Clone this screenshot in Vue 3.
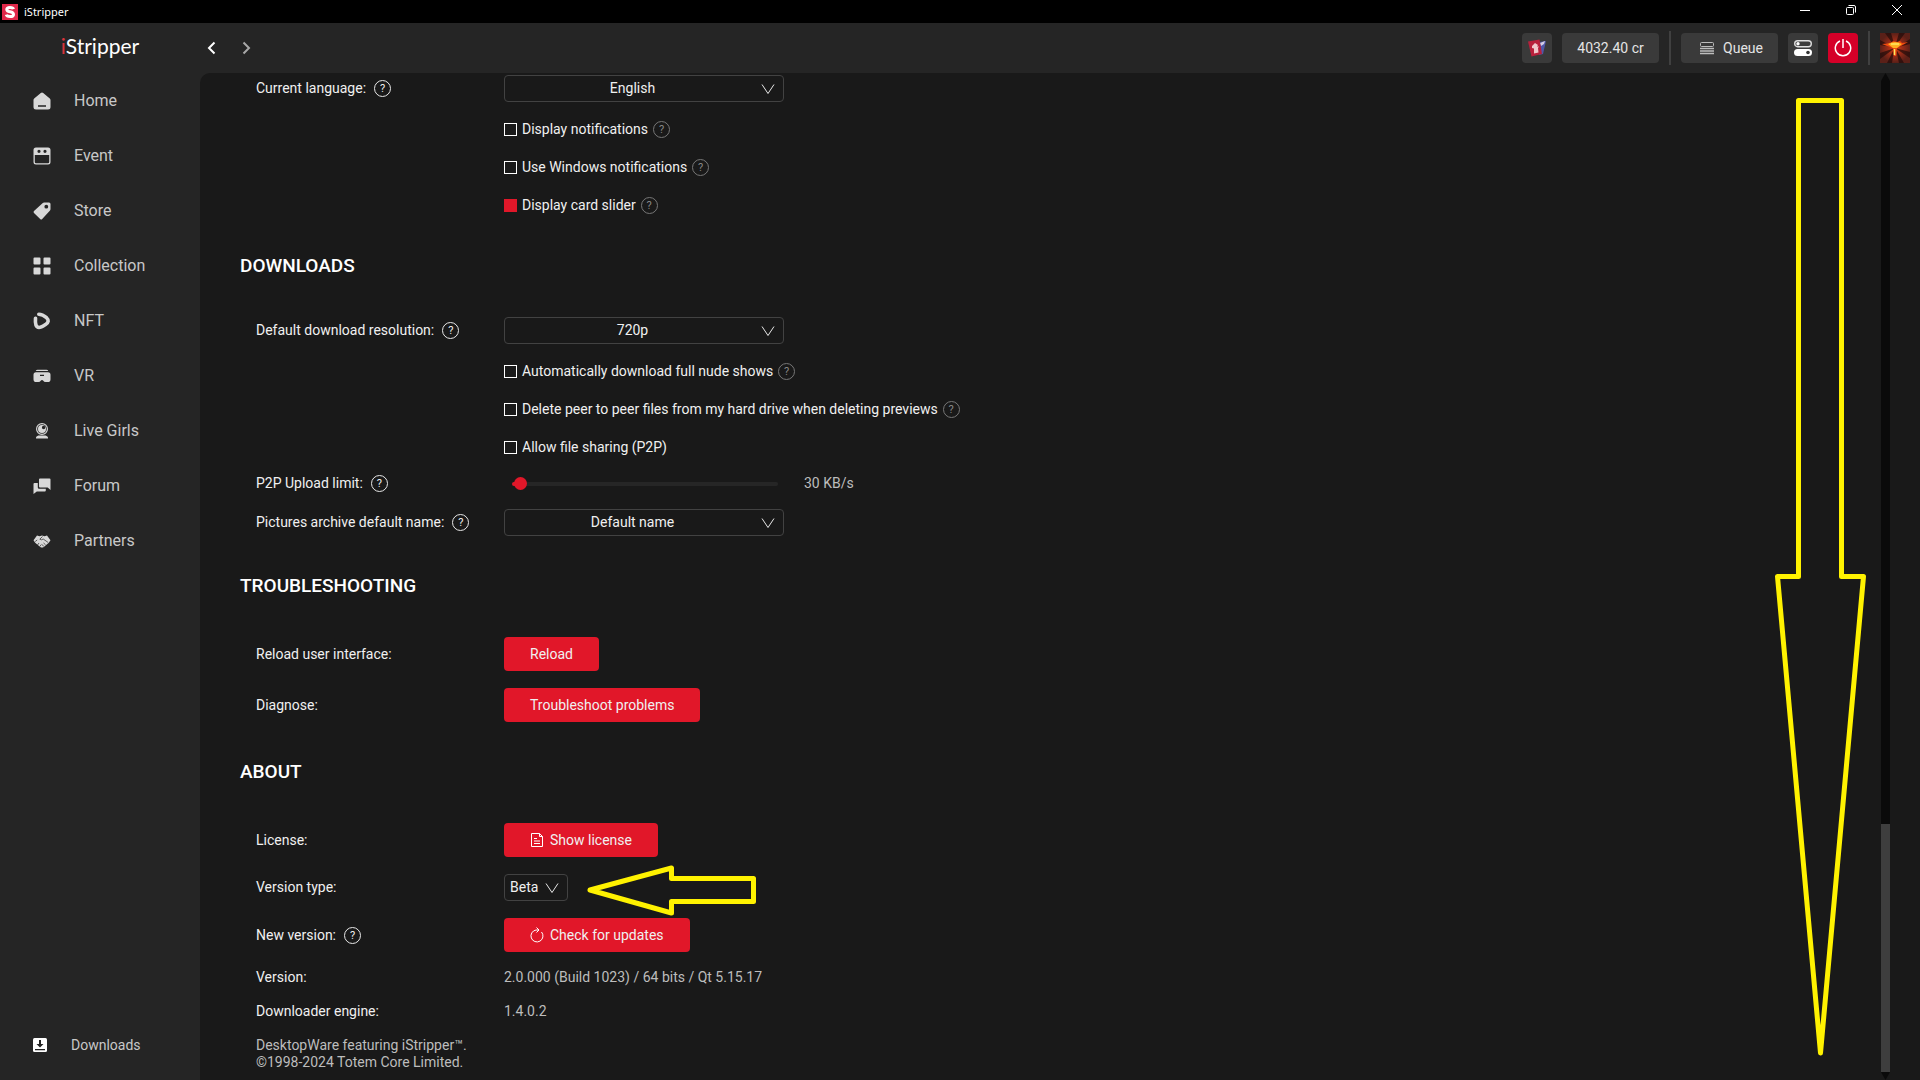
<script setup>
import { ref } from 'vue'

// Icons share an 18x18 box, holes are cut with the even-odd rule
const navItems = [
  {
    label: 'Home',
    d: 'M7.8 1q1.2-1 2.4 0l6.6 5.6q.7.6.7 1.5V15q0 2.5-2.5 2.5H3Q.5 17.5.5 15V8.100q0-.9.7-1.5zM5 13.200v1.600h8v-1.600z'
  },
  {
    label: 'Event',
    d: 'M3 .5h12q2.500 0 2.500 2.500v12q0 2.500-2.500 2.500H3Q.5 17.500.5 15V3Q.5.500 3 .500zM1.800 8v7q0 1.300 1.300 1.300h11.800q1.300 0 1.300-1.300V8zM6 2.700a1.600 1.600 0 1 0 0 3.200a1.600 1.600 0 1 0 0-3.200zM12 2.700a1.600 1.600 0 1 0 0 3.200a1.600 1.600 0 1 0 0-3.200z'
  },
  {
    label: 'Store',
    d: 'M9.500 1.200Q10.200.500 11.200.500H16q1.500 0 1.500 1.500v5q0 1-.7 1.700l-7.600 8.300q-1 1-2 0L1 11q-1-1 0-2zM13.300 2.800a1.900 1.900 0 1 0 0 3.800a1.900 1.900 0 1 0 0-3.800z'
  },
  {
    label: 'Collection',
    d: 'M1.500.5h5q1 0 1 1v5q0 1-1 1h-5q-1 0-1-1v-5q0-1 1-1zM11.500.5h5q1 0 1 1v5q0 1-1 1h-5q-1 0-1-1v-5q0-1 1-1zM1.500 10.500h5q1 0 1 1v5q0 1-1 1h-5q-1 0-1-1v-5q0-1 1-1zM11.500 10.500h5q1 0 1 1v5q0 1-1 1h-5q-1 0-1-1v-5q0-1 1-1z'
  },
  {
    label: 'NFT',
    stroke: 'M2.500 6.200Q1.700 15.500 6 15.500Q8 15.500 12.500 12.600Q17.300 9.200 13.500 5.700Q9.500 2.200 5.800 2.200'
  },
  {
    label: 'VR',
    d: 'M4.500 2.800h9q1.200 0 1.800 1.200H2.700q.6-1.200 1.800-1.200zM3 5.200h12q2.500 0 2.500 2.500v4.500q0 2.800-2.500 2.800h-2.500q-1.500 0-2.200-1.300q-1.300-1.500-2.600 0Q7 15 5.500 15H3Q.5 15 .5 12.200V7.700Q.5 5.200 3 5.200zM7 7.700v1.200h4V7.700z'
  },
  {
    label: 'Live Girls',
    d: 'M9 1a6 6 0 1 1 0 12a6 6 0 1 1 0-12zM9 2.200a4.800 4.800 0 1 0 0 9.600a4.800 4.800 0 1 0 0-9.600zM9 3a4 4 0 1 1 0 8a4 4 0 1 1 0-8zM10.600 3.800a1.700 1.700 0 1 0 0 3.400a1.700 1.700 0 1 0 0-3.400zM5.300 13.500h7.400q2.300 1 2.300 2v1H3v-1q0-1 2.300-2z'
  },
  {
    label: 'Forum',
    d: 'M7 1.500h9.500q1 0 1 1V13l-2.800-2.500H7q-1 0-1-1v-7q0-1 1-1zM1.500 6h3.300v4.500q0 1.300 1.300 1.300h6.700v1.700q0 1-1 1H3.800L.5 17V7q0-1 1-1z'
  },
  {
    label: 'Partners',
    d: 'M4 3.500l2.500.7L9 3.500l2.500.7 2.500-.7 3.500 4.700-1.700 2.500-5 4.200q-1.800 1.200-3.600 0l-5-4.200L.5 8.200z',
    lines: 'M9.500 4.500L6.800 7.200q1.800 1.300 3.400-.2l5 3.500M4.500 13l1.500-2M6.800 14.500l1.500-2M10.500 11l2 1.700M8.800 12.500l2 1.700M2.200 9.500l2-1.500'
  }
]

const checks = ref({
  notifications: false,
  windows: false,
  slider: true,
  autoDownload: false,
  deletePeer: false,
  sharing: false
})
const generalChecks = [
  { key: 'notifications', label: 'Display notifications', help: true },
  { key: 'windows', label: 'Use Windows notifications', help: true },
  { key: 'slider', label: 'Display card slider', help: true }
]
const downloadChecks = [
  { key: 'autoDownload', label: 'Automatically download full nude shows', help: true },
  { key: 'deletePeer', label: 'Delete peer to peer files from my hard drive when deleting previews', help: true },
  { key: 'sharing', label: 'Allow file sharing (P2P)', help: false }
]

const uploadLimit = ref(30)
</script>

<template>
  <div class="app">
    <div class="titlebar">
      <svg class="titlebar-logo" viewBox="0 0 16 16" aria-hidden="true">
        <rect width="16" height="16" fill="#e0284a" />
        <path d="M11.500 5.200Q11 3.500 8 3.500Q4.800 3.500 4.800 5.500Q4.800 7.200 8 7.800Q11.500 8.500 11.500 10.400Q11.500 12.500 8 12.500Q4.800 12.500 4.300 10.700" fill="none" stroke="#fff" stroke-width="3" />
      </svg>
      <span class="titlebar-name">iStripper</span>
      <div class="window-controls">
        <button type="button" aria-label="Minimize">
          <svg viewBox="0 0 12 12"><path d="M1 6.500h10" /></svg>
        </button>
        <button type="button" aria-label="Restore">
          <svg viewBox="0 0 12 12"><rect x="1.500" y="3.500" width="7" height="7" rx="1" /><path d="M3.500 1.500H9q1.500 0 1.500 1.500v5.500" /></svg>
        </button>
        <button type="button" aria-label="Close">
          <svg viewBox="0 0 12 12"><path d="M1 1l10 10M11 1L1 11" /></svg>
        </button>
      </div>
    </div>

    <header class="topbar">
      <div class="brand"><span class="brand-i">i</span>Stripper</div>
      <div class="history">
        <button type="button" aria-label="Back">
          <svg viewBox="0 0 14 14"><path d="M9.500 1.500L4 7l5.500 5.500" /></svg>
        </button>
        <button type="button" class="is-dim" aria-label="Forward">
          <svg viewBox="0 0 14 14"><path d="M4.500 1.500L10 7l-5.500 5.500" /></svg>
        </button>
      </div>
      <div class="tools">
        <button type="button" class="tool tool-icon" aria-label="Cards">
          <svg width="20" height="20" viewBox="0 0 20 20">
            <path d="M12 4l7-1-3 13-4 1z" fill="#5058a8" />
            <path d="M13 5l5-2-1 3-3 2z" fill="#d5cfe8" />
            <path d="M1 3.500L12.500 1.500 15 16 4.500 18.500z" fill="#b8203c" />
            <path d="M5 8l3-3 3 2-1 1.500h2L11 10l.5 4.500-4.500 1V10.500L5 10z" fill="#f0c8cc" />
          </svg>
        </button>
        <button type="button" class="tool tool-wide">4032.40 cr</button>
        <span class="divider" />
        <button type="button" class="tool tool-wide tool-queue">
          <svg width="14" height="14" viewBox="0 0 14 14" fill="none" stroke="#bdbdbd">
            <rect x=".5" y="1.500" width="13" height="4" rx="1" />
            <path d="M0 7.500h14M0 10h14M0 12.500h14" stroke-width="1.500" />
          </svg>
          Queue
        </button>
        <button type="button" class="tool tool-icon" aria-label="Display options">
          <svg width="18" height="16" viewBox="0 0 18 16">
            <rect x=".7" y=".7" width="16.600" height="6" rx="3" fill="none" stroke="#ddd" stroke-width="1.400" />
            <circle cx="4" cy="3.700" r="1.700" fill="#fff" />
            <rect y="9" width="18" height="7" rx="3.500" fill="#fff" />
            <circle cx="14" cy="12.500" r="1.800" fill="#333" />
          </svg>
        </button>
        <button type="button" class="tool tool-icon tool-power" aria-label="Power">
          <svg width="18" height="18" viewBox="0 0 18 18" fill="none" stroke="#fff" stroke-width="1.500">
            <path d="M6 2a7.700 7.700 0 1 0 6 0M9 0v9" />
          </svg>
        </button>
        <span class="divider" />
        <button type="button" class="avatar" aria-label="Profile">
          <svg width="30" height="30" viewBox="0 0 30 30">
            <defs>
              <radialGradient id="glow">
                <stop offset="0" stop-color="#e04010" />
                <stop offset=".5" stop-color="#9a2c18" />
                <stop offset="1" stop-color="#5a2018" />
              </radialGradient>
            </defs>
            <rect width="30" height="30" fill="url(#glow)" />
            <path d="M15 14L5 0h6zM15 14L19 0h6zM15 15L0 20v6zM15 15l15 4v6zM14 16L7 30h5zM16 16l3 14h5zM0 7v5l13 2zM30 6v5l-12 3z" fill="#200c0a" opacity=".7" />
            <path d="M2 11l9-1 2-2 4 1 3-1 2 2 6-1-7 4-4 2-1 8-2 0-1-8-6-2z" fill="#f04a10" />
            <path d="M8 11q7-4 14 0l-5 4h-4z" fill="#ffb020" />
            <path d="M11 11h8M14.500 16v6" stroke="#ffe860" stroke-width="1.500" />
          </svg>
        </button>
      </div>
    </header>

    <div class="body">
      <nav class="sidebar">
        <a v-for="item in navItems" :key="item.label" href="#" class="nav-link">
          <svg class="nav-icon" viewBox="0 0 18 18" aria-hidden="true">
            <path v-if="item.d" :d="item.d" fill="#d8d8d8" fill-rule="evenodd" />
            <path v-if="item.stroke" :d="item.stroke" fill="none" stroke="#d8d8d8" stroke-width="3.600" stroke-linecap="round" />
            <path v-if="item.lines" :d="item.lines" fill="none" stroke="#252525" stroke-width=".7" />
          </svg>
          {{ item.label }}
        </a>
        <a href="#" class="nav-link nav-downloads">
          <svg width="14" height="14" viewBox="0 0 14 14" aria-hidden="true">
            <rect width="14" height="14" rx="1.500" fill="#fff" />
            <path d="M6 2h2v4h2.500L7 9.500 3.500 6H6zM2 11h10v1.200H2z" fill="#222" />
          </svg>
          Downloads
        </a>
      </nav>

      <main class="content">
        <section class="rows">
          <div class="row">
            <div class="row-label">
              <label for="language">Current language:</label>
              <button type="button" class="help" aria-label="Help">?</button>
            </div>
            <div class="select">
              <select id="language"><option>English</option></select>
              <svg viewBox="0 0 14 10"><path d="M1 .5l6 9 6-9" /></svg>
            </div>
          </div>
          <div v-for="item in generalChecks" :key="item.key" class="check-row">
            <label class="check"><input v-model="checks[item.key]" type="checkbox">{{ item.label }}</label>
            <button v-if="item.help" type="button" class="help is-dim" aria-label="Help">?</button>
          </div>
        </section>

        <h2>DOWNLOADS</h2>
        <section class="rows">
          <div class="row">
            <div class="row-label">
              <label for="resolution">Default download resolution:</label>
              <button type="button" class="help" aria-label="Help">?</button>
            </div>
            <div class="select">
              <select id="resolution"><option>720p</option></select>
              <svg viewBox="0 0 14 10"><path d="M1 .5l6 9 6-9" /></svg>
            </div>
          </div>
          <div v-for="item in downloadChecks" :key="item.key" class="check-row">
            <label class="check"><input v-model="checks[item.key]" type="checkbox">{{ item.label }}</label>
            <button v-if="item.help" type="button" class="help is-dim" aria-label="Help">?</button>
          </div>
          <div class="row">
            <div class="row-label">
              <label for="upload">P2P Upload limit:</label>
              <button type="button" class="help" aria-label="Help">?</button>
            </div>
            <div class="slider">
              <input id="upload" v-model="uploadLimit" type="range" min="0" max="5000">
              <span class="value">{{ uploadLimit }} KB/s</span>
            </div>
          </div>
          <div class="row">
            <div class="row-label">
              <label for="archive">Pictures archive default name:</label>
              <button type="button" class="help" aria-label="Help">?</button>
            </div>
            <div class="select">
              <select id="archive"><option>Default name</option></select>
              <svg viewBox="0 0 14 10"><path d="M1 .5l6 9 6-9" /></svg>
            </div>
          </div>
        </section>

        <h2>TROUBLESHOOTING</h2>
        <section class="rows">
          <div class="row">
            <span class="row-label">Reload user interface:</span>
            <button type="button" class="action">Reload</button>
          </div>
          <div class="row">
            <span class="row-label">Diagnose:</span>
            <button type="button" class="action">Troubleshoot problems</button>
          </div>
        </section>

        <h2>ABOUT</h2>
        <section class="rows">
          <div class="row">
            <span class="row-label">License:</span>
            <button type="button" class="action">
              <svg width="14" height="16" viewBox="0 0 14 16">
                <path d="M1.500 1.500h8l3 3v10h-11zM9.500 1.500v3h3M4 6.500h3M4 9h6M4 11.500h6" />
              </svg>
              Show license
            </button>
          </div>
          <div class="row">
            <label class="row-label" for="version-type">Version type:</label>
            <div class="select is-small">
              <select id="version-type"><option>Beta</option></select>
              <svg viewBox="0 0 14 10"><path d="M1 .5l6 9 6-9" /></svg>
            </div>
          </div>
          <div class="row">
            <div class="row-label">
              New version:
              <button type="button" class="help" aria-label="Help">?</button>
            </div>
            <button type="button" class="action">
              <svg width="14" height="16" viewBox="0 0 14 16">
                <path d="M11.500 5a6 6 0 1 1-5.500-2h3M6.500.5L9 3 6.500 5.500" />
              </svg>
              Check for updates
            </button>
          </div>
          <div class="row">
            <span class="row-label">Version:</span>
            <span class="value">2.0.000 (Build 1023) / 64 bits / Qt 5.15.17</span>
          </div>
          <div class="row">
            <span class="row-label">Downloader engine:</span>
            <span class="value">1.4.0.2</span>
          </div>
          <p class="legal">DesktopWare featuring iStripper™.<br>©1998-2024 Totem Core Limited.</p>
        </section>
      </main>

      <div class="scrollbar">
        <svg viewBox="0 0 9 8"><path d="M4.500 0L9 8H0z" /></svg>
        <div class="scrollbar-track"><div class="scrollbar-thumb" /></div>
        <svg viewBox="0 0 9 8"><path d="M0 0h9L4.500 8z" /></svg>
      </div>
    </div>

    <!-- Arrows drawn over the window -->
    <svg class="mark mark-down" width="92" height="962" viewBox="0 0 92 962" aria-hidden="true">
      <path d="M24.500 4.500h43v476h22L46.500 957 3.500 480.500h21z" />
    </svg>
    <svg class="mark mark-left" width="172" height="54" viewBox="0 0 172 54" aria-hidden="true">
      <path d="M4 27L85.500 5v10.500h82v23h-82V50z" />
    </svg>
  </div>
</template>

<style>
body {
  margin: 0;
  background: #191919;
}
</style>

<style scoped>
.app {
  position: relative;
  display: flex;
  flex-direction: column;
  height: 100vh;
  overflow: hidden;
  background: #252525;
  color: #f0f0f0;
  font-family: Roboto, "Liberation Sans", sans-serif;
  font-size: 14px;
  line-height: 17px;
}
button,
select,
input {
  margin: 0;
  font: inherit;
  color: inherit;
}
button {
  padding: 0;
  border: 0;
  background: none;
  cursor: pointer;
}

.titlebar {
  display: flex;
  align-items: center;
  flex: none;
  height: 23px;
  padding-left: 2px;
  background: #000;
  color: #fff;
  font-family: "Noto Sans", "Open Sans", sans-serif;
  font-size: 11px;
}
.titlebar-logo {
  width: 16px;
  height: 16px;
}
.titlebar-name {
  margin-left: 6px;
}
.window-controls {
  display: flex;
  margin-left: auto;
  height: 100%;
}
.window-controls button {
  display: flex;
  align-items: center;
  justify-content: center;
  width: 46px;
  height: 20px;
}
.window-controls svg {
  width: 12px;
  height: 12px;
  fill: none;
  stroke: #fff;
}

.topbar {
  display: flex;
  align-items: center;
  flex: none;
  height: 50px;
  padding-right: 10px;
}
.brand {
  width: 200px;
  padding-bottom: 4px;
  text-align: center;
  font-family: Lato, sans-serif;
  font-size: 21px;
  line-height: 24px;
  color: #fff;
}
.brand-i {
  color: #d8343c;
}
.history {
  display: flex;
  gap: 20px;
  padding-left: 5px;
}
.history button {
  display: flex;
}
.history svg {
  width: 14px;
  height: 14px;
  fill: none;
  stroke: #fff;
  stroke-width: 2;
}
.history .is-dim {
  opacity: 0.6;
}
.tools {
  display: flex;
  align-items: center;
  gap: 10px;
  margin-left: auto;
}
.tool {
  display: flex;
  align-items: center;
  justify-content: center;
  gap: 9px;
  height: 30px;
  border-radius: 4px;
  background: #3a3a3a;
  color: #e4e4e4;
}
.tool-icon {
  width: 30px;
}
.tool-wide {
  box-sizing: border-box;
  width: 97px;
}
.tool-queue {
  padding-left: 4px;
}
.tool-power {
  background: #d50028;
}
.divider {
  width: 2px;
  height: 34px;
  background: #404040;
}
.avatar {
  display: flex;
}

.body {
  display: flex;
  flex: 1;
  min-height: 0;
}
.sidebar {
  display: flex;
  flex-direction: column;
  flex: none;
  width: 200px;
}
.nav-link {
  display: flex;
  align-items: center;
  gap: 23px;
  height: 55px;
  padding-left: 33px;
  color: #c8c8c8;
  font-size: 16px;
  text-decoration: none;
}
.nav-icon {
  width: 18px;
  height: 18px;
}
.nav-downloads {
  gap: 24px;
  height: 70px;
  margin-top: auto;
  font-size: 14px;
}

.content {
  flex: 1;
  padding: 2px 40px 9px;
  overflow: hidden;
  border-top-left-radius: 10px;
  background: #191919;
}
h2 {
  margin: 38px 0 39px;
  font-size: 19px;
  font-weight: 500;
  line-height: 24px;
  color: #fff;
}
.rows {
  display: flex;
  flex-direction: column;
  gap: 17px;
  padding-left: 16px;
}
.row {
  display: grid;
  grid-template-columns: 248px 1fr;
  align-items: center;
  justify-items: start;
}
.row-label {
  display: flex;
  align-items: center;
  gap: 8px;
}
.check-row {
  display: flex;
  align-items: center;
  gap: 5px;
  height: 21px;
  padding-left: 248px;
}
.check {
  display: flex;
  align-items: center;
  gap: 5px;
}
.check input {
  appearance: none;
  box-sizing: border-box;
  width: 13px;
  height: 13px;
  border: 1px solid #fff;
}
.check input:checked {
  border-color: #e11729;
  background: #e11729;
}
.help {
  box-sizing: border-box;
  width: 17px;
  height: 17px;
  border: 1px solid #e8e8e8;
  border-radius: 50%;
  font-size: 11px;
  line-height: 15px;
  text-align: center;
}
.help.is-dim {
  border-color: #777;
  color: #888;
}

.select {
  position: relative;
  width: 280px;
}
.select select {
  appearance: none;
  box-sizing: border-box;
  display: block;
  width: 100%;
  height: 27px;
  padding: 0 27px 0 4px;
  border: 1px solid #424242;
  border-radius: 4px;
  background: none;
  text-align: center;
  text-align-last: center;
}
.select svg {
  position: absolute;
  top: 9px;
  right: 9px;
  width: 14px;
  height: 10px;
  fill: none;
  stroke: #e8e8e8;
  pointer-events: none;
}
.select.is-small {
  width: 64px;
}
.select.is-small select {
  padding: 0 24px 0 5px;
  text-align: left;
  text-align-last: left;
}

.slider {
  display: flex;
  align-items: center;
  gap: 26px;
  height: 17px;
  padding-left: 8px;
}
.slider input {
  appearance: none;
  width: 266px;
  height: 13px;
  background: none;
}
.slider input::-webkit-slider-runnable-track {
  height: 4px;
  border-radius: 2px;
  background: linear-gradient(to right, #e11729 8px, #262626 8px);
}
.slider input::-webkit-slider-thumb {
  appearance: none;
  width: 13px;
  height: 13px;
  margin-top: -5px;
  border-radius: 50%;
  background: #e11729;
}
.value,
.legal {
  color: #bdbdbd;
}
.action {
  display: flex;
  align-items: center;
  gap: 6px;
  height: 34px;
  padding: 0 26px;
  border-radius: 4px;
  background: #e11729;
}
.action svg {
  fill: none;
  stroke: #fff;
}
.legal {
  margin: 0;
}

.scrollbar {
  display: flex;
  flex-direction: column;
  flex: none;
  width: 9px;
  padding-right: 30px;
  background: #191919;
}
.scrollbar svg {
  flex: none;
  width: 9px;
  height: 8px;
  fill: #0a0a0a;
}
.scrollbar-track {
  display: flex;
  flex-direction: column;
  justify-content: flex-end;
  flex: 1;
  background: #0a0a0a;
}
.scrollbar-thumb {
  height: 25%;
  background: #3e3e3e;
}

.mark {
  position: absolute;
  fill: none;
  stroke: #fff200;
  stroke-width: 5;
  stroke-linejoin: round;
  pointer-events: none;
}
.mark-down {
  top: 96px;
  right: 54px;
}
.mark-left {
  top: 863px;
  left: 586px;
}
</style>
